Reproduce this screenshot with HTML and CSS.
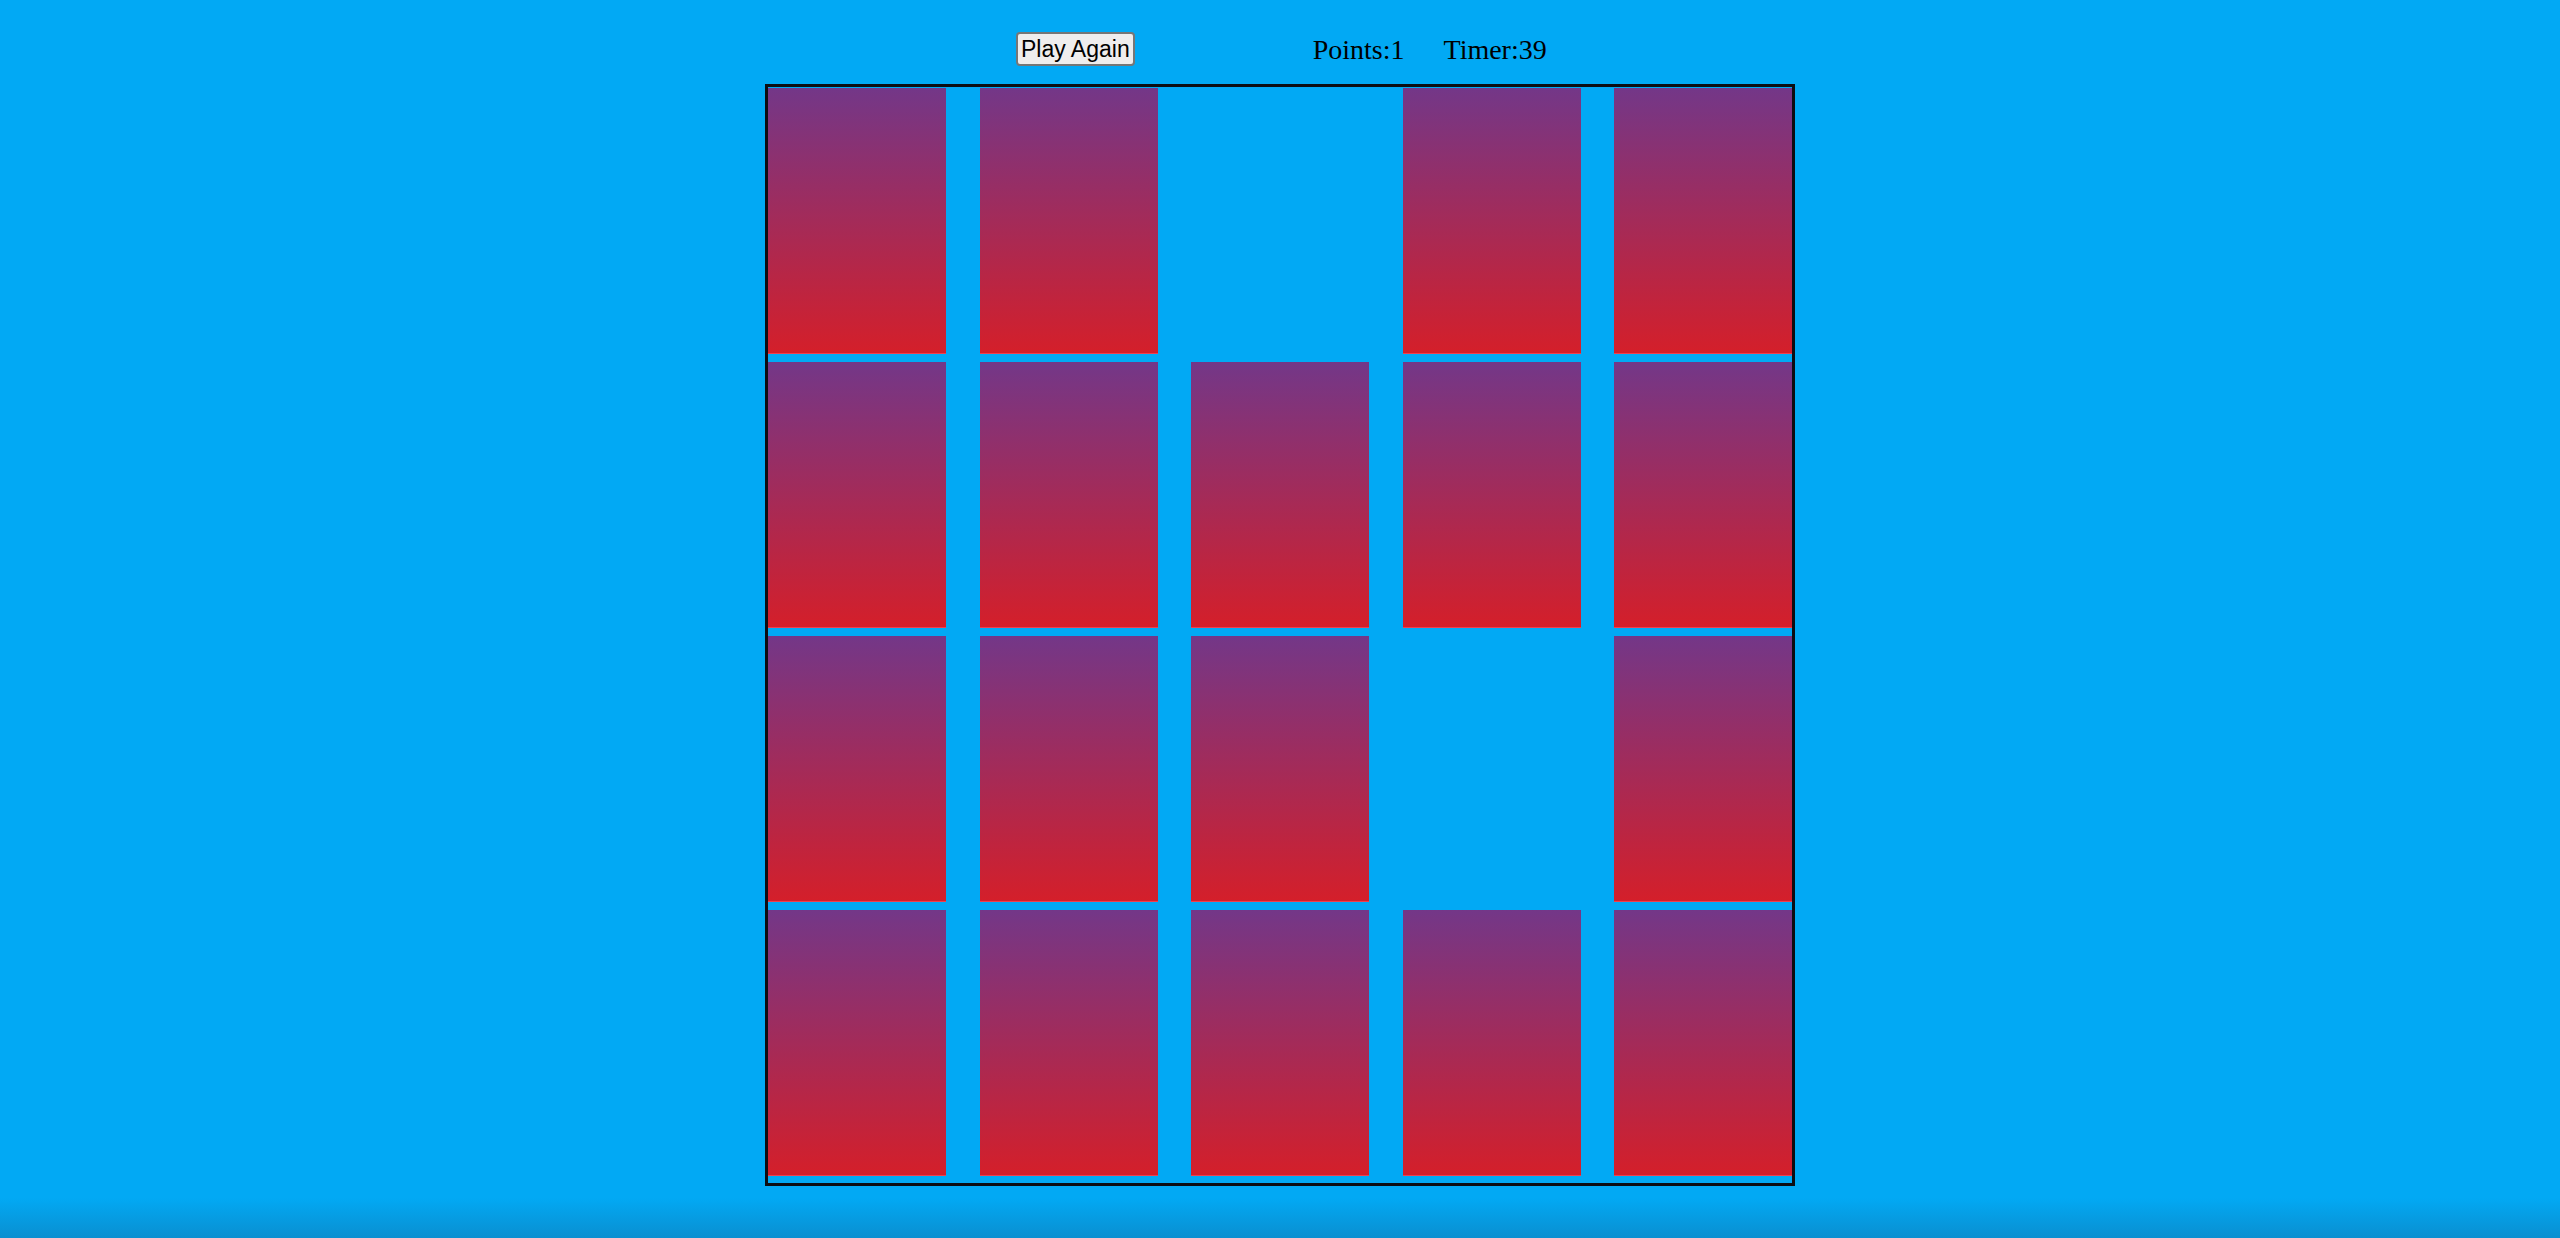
FILE: index.html
```html
<!DOCTYPE html>
<html lang="en">
<head>
    <meta charset="UTF-8">
    <meta name="viewport" content="width=device-width, initial-scale=1.0">
    <title>Memory Game</title>
    <link rel="stylesheet" href="styles.css">
</head>
<body>
    <div id="game">
        <div id="top-bar">
            <button id="restart">Play Again</button>
            <span id="points">Points:1</span>
            <span id="timer">Timer:39</span>
        </div>

        <div id="board">
            <div class="card"></div>
            <div class="card"></div>
            <div class="card gone"></div>
            <div class="card"></div>
            <div class="card"></div>

            <div class="card"></div>
            <div class="card"></div>
            <div class="card"></div>
            <div class="card"></div>
            <div class="card"></div>

            <div class="card"></div>
            <div class="card"></div>
            <div class="card"></div>
            <div class="card gone"></div>
            <div class="card"></div>

            <div class="card"></div>
            <div class="card"></div>
            <div class="card"></div>
            <div class="card"></div>
            <div class="card"></div>
        </div>
    </div>
</body>
</html>
```

FILE: styles.css
```css
html, body {
    height: 100%;
}
body {
    margin: 0;
    background: linear-gradient(to bottom, #02a9f4 0, #02a9f4 1198px, #0a8fd0 1238px);
    font-family: "Liberation Serif", "Times New Roman", serif;
    overflow: hidden;
}
#game {
    width: 1030px;
    margin: 0 auto;
}
#top-bar {
    display: flex;
    align-items: center;
    height: 34px;
    padding: 32px 0 0 251px;
}
#restart {
    height: 34px;
    padding: 0 3px;
    white-space: nowrap;
    font-family: "Liberation Sans", Arial, sans-serif;
    font-size: 23px;
    color: #000;
    background: #efeded;
    border: 2px solid #767676;
    border-radius: 4px;
}
#points, #timer {
    font-size: 28px;
    color: #000;
    line-height: 34px;
    padding-top: 2px;
}
#points {
    margin-left: 178px;
}
#timer {
    margin-left: 39px;
}
#board {
    display: grid;
    grid-template-columns: repeat(5, 178px);
    grid-template-rows: repeat(4, 266px);
    column-gap: 33.5px;
    row-gap: 8px;
    width: 1024px;
    padding: 1px 0 7px;
    margin-top: 18px;
    border: 3px solid #0d0d12;
}
.card {
    background: linear-gradient(to bottom, #733788, #d41f2a);
    border-bottom: 1px solid #f0404e;
    box-sizing: border-box;
}
.card.gone {
    visibility: hidden;
}
```
